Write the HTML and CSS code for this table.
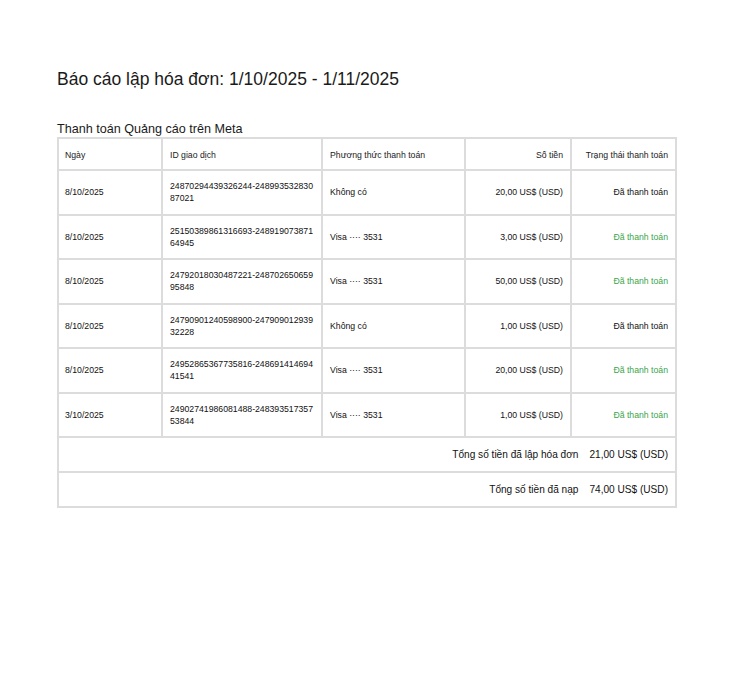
FILE: index.html
```html
<!DOCTYPE html>
<html lang="vi">
<head>
<meta charset="utf-8">
<link rel="stylesheet" href="styles.css">
</head>
<body>
<div class="page">
  <h1 class="title">Báo cáo lập hóa đơn: 1/10/2025 - 1/11/2025</h1>
  <h2 class="subtitle">Thanh toán Quảng cáo trên Meta</h2>
  <table class="report">
    <colgroup>
      <col class="c1"><col class="c2"><col class="c3"><col class="c4"><col class="c5">
    </colgroup>
    <thead>
      <tr class="head">
        <th>Ngày</th>
        <th>ID giao dịch</th>
        <th>Phương thức thanh toán</th>
        <th class="r">Số tiền</th>
        <th class="r">Trạng thái thanh toán</th>
      </tr>
    </thead>
    <tbody>
      <tr>
        <td>8/10/2025</td>
        <td class="id">24870294439326244-24899353283087021</td>
        <td>Không có</td>
        <td class="r">20,00 US$ (USD)</td>
        <td class="r">Đã thanh toán</td>
      </tr>
      <tr>
        <td>8/10/2025</td>
        <td class="id">25150389861316693-24891907387164945</td>
        <td>Visa ···· 3531</td>
        <td class="r">3,00 US$ (USD)</td>
        <td class="r ok">Đã thanh toán</td>
      </tr>
      <tr>
        <td>8/10/2025</td>
        <td class="id">24792018030487221-24870265065995848</td>
        <td>Visa ···· 3531</td>
        <td class="r">50,00 US$ (USD)</td>
        <td class="r ok">Đã thanh toán</td>
      </tr>
      <tr>
        <td>8/10/2025</td>
        <td class="id">24790901240598900-24790901293932228</td>
        <td>Không có</td>
        <td class="r">1,00 US$ (USD)</td>
        <td class="r">Đã thanh toán</td>
      </tr>
      <tr>
        <td>8/10/2025</td>
        <td class="id">24952865367735816-24869141469441541</td>
        <td>Visa ···· 3531</td>
        <td class="r">20,00 US$ (USD)</td>
        <td class="r ok">Đã thanh toán</td>
      </tr>
      <tr>
        <td>3/10/2025</td>
        <td class="id">24902741986081488-24839351735753844</td>
        <td>Visa ···· 3531</td>
        <td class="r">1,00 US$ (USD)</td>
        <td class="r ok">Đã thanh toán</td>
      </tr>
      <tr class="sum">
        <td colspan="5"><div class="sumline"><span>Tổng số tiền đã lập hóa đơn</span><span>21,00 US$ (USD)</span></div></td>
      </tr>
      <tr class="sum">
        <td colspan="5"><div class="sumline"><span>Tổng số tiền đã nạp</span><span>74,00 US$ (USD)</span></div></td>
      </tr>
    </tbody>
  </table>
</div>
</body>
</html>
```

FILE: styles.css
```css
html, body {
  margin: 0;
  padding: 0;
  background: #ffffff;
}
body {
  font-family: "Liberation Sans", Arial, sans-serif;
  color: #111111;
}
.page {
  padding: 68px 0 0 57px;
}
.title {
  margin: 0;
  font-size: 17.5px;
  font-weight: normal;
  line-height: 22px;
  color: #1a1a1a;
}
.subtitle {
  margin: 32px 0 0 0;
  font-size: 12.6px;
  font-weight: normal;
  line-height: 15px;
  color: #1a1a1a;
}
.report {
  border-collapse: collapse;
  table-layout: fixed;
  width: 618px;
  font-size: 8.7px;
  line-height: 12px;
}
.c1 { width: 104px; }
.c2 { width: 160px; }
.c3 { width: 143px; }
.c4 { width: 106px; }
.c5 { width: 105px; }
.report th, .report td {
  border: 2px solid #dcdcdc;
  padding: 0 7px;
  text-align: left;
  vertical-align: middle;
  font-weight: normal;
}
.report th:first-child, .report td:first-child { padding-left: 6px; }
.report .r { text-align: right; }
.head th { height: 29px; padding-top: 1px; color: #222; }
.report tbody tr td { height: 42.5px; }
.report td.id { word-break: break-all; padding-right: 6px; }
.ok { color: #3aa54c; }
.report tr.sum td { height: 33px; padding-right: 7px; font-size: 10.1px; }
.sumline {
  display: flex;
  justify-content: flex-end;
  gap: 11px;
}
```
